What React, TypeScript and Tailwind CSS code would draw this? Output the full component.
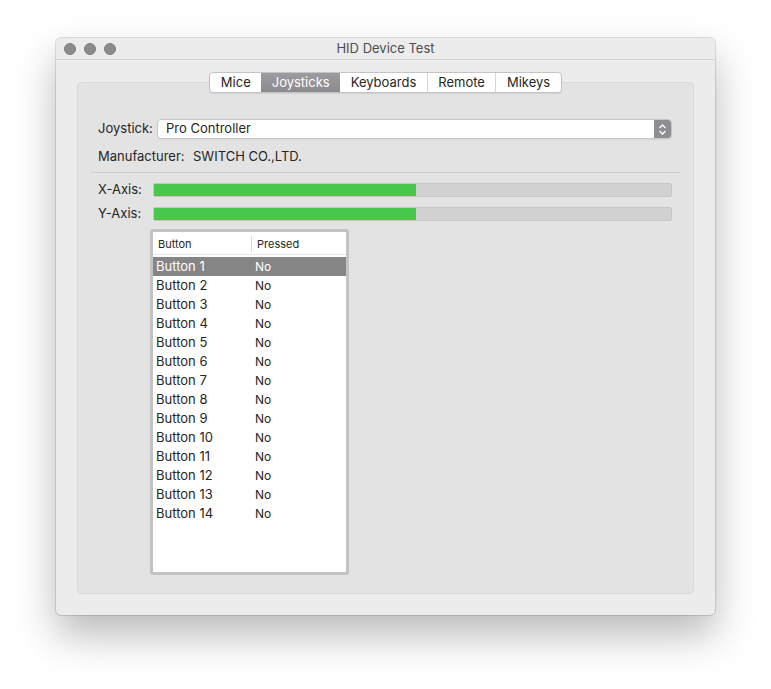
const TABS = ["Mice", "Joysticks", "Keyboards", "Remote", "Mikeys"];
const ACTIVE_TAB = "Joysticks";
const BUTTONS = Array.from({ length: 14 }, (_, i) => `Button ${i + 1}`);

function AxisBar({ label }: { label: string }) {
  return (
    <div className="flex items-center h-[14px]">
      <span className="w-[55px] shrink-0">{label}</span>
      <div className="flex-1 h-[14px] rounded-[2px] bg-[#d1d1d1] border border-[#c6c6c6] overflow-hidden">
        <div className="h-full w-[262px] bg-[#47c84d]" />
      </div>
    </div>
  );
}

export default function App() {
  return (
    <div
      className="w-[771px] h-[689px] bg-white pt-[38px] pl-[56px] text-[13px] text-[#262626]"
      style={{ fontFamily: "Inter, 'Liberation Sans', Arial, sans-serif" }}
    >
      <div className="w-[659px] h-[577px] rounded-[5px] bg-[#ececec] shadow-[0_0_0_1px_rgba(0,0,0,0.12),0_20px_40px_rgba(0,0,0,0.28)] flex flex-col overflow-hidden">
        {/* Title bar */}
        <div className="relative h-[22px] shrink-0 flex items-center justify-center border-b border-[#d6d6d6] bg-[#ececec]">
          <div className="absolute left-[8px] top-[5px] flex gap-[8px]">
            <span className="w-[12px] h-[12px] rounded-full bg-[#8c8c8c] border border-[#7d7d7d]" />
            <span className="w-[12px] h-[12px] rounded-full bg-[#8c8c8c] border border-[#7d7d7d]" />
            <span className="w-[12px] h-[12px] rounded-full bg-[#8c8c8c] border border-[#7d7d7d]" />
          </div>
          <span className="text-[13px] text-[#4d4d4d] leading-none">HID Device Test</span>
        </div>

        {/* Body */}
        <div className="flex-1 flex flex-col px-[21px] pt-[12px] pb-[21px]">
          {/* Tabs */}
          <div className="relative z-10 flex justify-center">
            <div className="flex h-[21px] rounded-[4px] border border-[#c4c4c4] bg-white shadow-[0_1px_1px_rgba(0,0,0,0.08)] overflow-hidden">
              {TABS.map((t, i) => (
                <div
                  key={t}
                  className={
                    t === ACTIVE_TAB
                      ? "flex items-center px-[10.5px] bg-gradient-to-b from-[#9c9ba0] to-[#8b8a8f] text-white"
                      : i > 0 && TABS[i - 1] !== ACTIVE_TAB
                        ? "flex items-center px-[10.5px] border-l border-[#d6d6d6]"
                        : "flex items-center px-[10.5px]"
                  }
                >
                  {t}
                </div>
              ))}
            </div>
          </div>

          {/* Tab content */}
          <div className="-mt-[11px] flex-1 rounded-[4px] bg-[#e3e3e3] border border-[#dadada] flex flex-col pt-[36px] px-[13px]">
            <div className="flex items-center h-[20px] pl-[7px] pr-[8px]">
              <span className="w-[59px] shrink-0">Joystick:</span>
              <div className="flex-1 h-[20px] flex rounded-[4px] bg-white border border-[#c6c6c6] shadow-[0_1px_1px_rgba(0,0,0,0.06)] overflow-hidden">
                <span className="flex-1 pl-[8px] flex items-center">Pro Controller</span>
                <span className="w-[17px] bg-[#8e8e92] flex items-center justify-center">
                  <svg width="9" height="13" viewBox="0 0 9 13" fill="none" stroke="white" strokeWidth="1.3">
                    <path d="M1.5 5 L4.5 2 L7.5 5" />
                    <path d="M1.5 8 L4.5 11 L7.5 8" />
                  </svg>
                </span>
              </div>
            </div>

            <div className="flex items-center h-[16px] mt-[10px] pl-[7px]">
              <span className="w-[95px] shrink-0">Manufacturer:</span>
              <span>SWITCH CO.,LTD.</span>
            </div>

            <div className="mt-[7px] border-t border-[#cecece]" />

            <div className="flex flex-col gap-[10px] mt-[10px] pl-[7px] pr-[8px]">
              <AxisBar label="X-Axis:" />
              <AxisBar label="Y-Axis:" />
            </div>

            {/* Button table */}
            <div className="mt-[8px] ml-[59px] w-[199px] h-[346px] rounded-[3px] border-[3px] border-[#c3c3c3] bg-white flex flex-col">
              <div className="flex h-[23px] pt-[2px] items-center text-[11px] border-b border-[#e6e6e6] shrink-0">
                <span className="w-[99px] pl-[5px] border-r border-[#dcdcdc]">Button</span>
                <span className="pl-[5px]">Pressed</span>
              </div>
              <div className="mt-[2px] flex flex-col">
                {BUTTONS.map((b, i) => (
                  <div
                    key={b}
                    className={
                      i === 0
                        ? "flex items-center h-[19px] bg-[#858585] text-white"
                        : "flex items-center h-[19px]"
                    }
                  >
                    <span className="w-[102px] pl-[3px]">{b}</span>
                    <span className="text-[12px]">No</span>
                  </div>
                ))}
              </div>
            </div>
          </div>
        </div>
      </div>
    </div>
  );
}
